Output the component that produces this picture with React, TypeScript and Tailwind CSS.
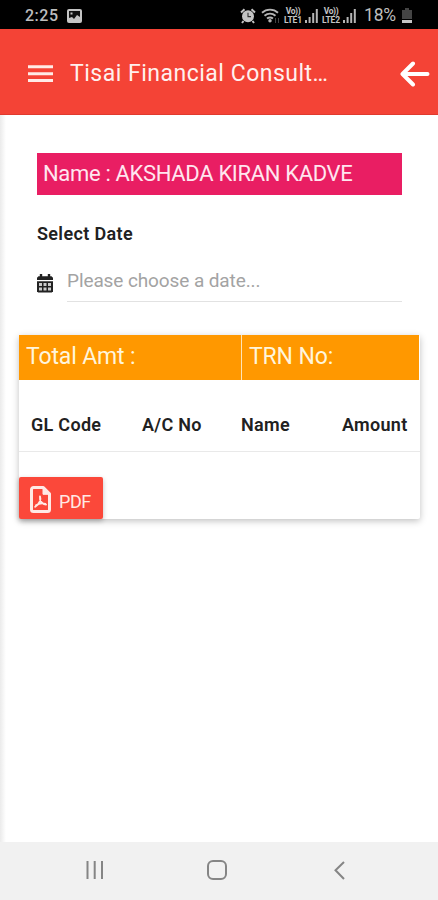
import React from 'react';

const columns = [
  { label: 'GL Code', className: 'w-[111px]' },
  { label: 'A/C No', className: 'w-[99px]' },
  { label: 'Name', className: 'w-[101px]' },
  { label: 'Amount', className: '' },
];

const Signal = () => (
  <svg width="13" height="14" viewBox="0 0 13 14" fill="#b5b5b5">
    <rect x="0" y="11" width="2" height="3" />
    <rect x="3.6" y="8" width="2" height="6" />
    <rect x="7.2" y="4" width="2" height="10" />
    <rect x="10.8" y="0" width="2" height="14" />
  </svg>
);

const Lte = ({ sim }: { sim: number }) => (
  <div className="w-[20px] text-center text-[8.5px] font-bold leading-[8.5px] whitespace-nowrap text-[#c4c4c4]">
    <div className="tracking-[-0.4px]">Vo))</div>
    <div className="tracking-[-0.2px]">LTE{sim}</div>
  </div>
);

const StatusBar = () => (
  <div className="flex h-[29px] shrink-0 items-center bg-black pt-[2px] pl-[25px] text-[#bdbdbd]">
    <span className="w-[42px] text-[16px] font-medium leading-none tracking-[0.5px]">2:25</span>
    <svg width="15" height="14" viewBox="0 0 15 14">
      <rect width="15" height="14" rx="2" fill="#c4c4c4" />
      <path d="M2 9V2h11v6l-3-2-3 4-2-2z" fill="#111" />
      <rect x="3.5" y="3.5" width="2" height="2" fill="#c4c4c4" />
    </svg>

    <svg className="ml-[158px]" width="16" height="16" viewBox="0 0 16 16" fill="none">
      <path d="M1 4.5L4.5 1.2M15 4.5L11.5 1.2M3.5 13L2 15M12.5 13l1.5 2" stroke="#c4c4c4" strokeWidth="2" />
      <circle cx="8" cy="8.3" r="6" fill="#c4c4c4" />
      <path d="M8 4.8v3.8h3" stroke="#333" strokeWidth="1.1" />
    </svg>
    <svg className="ml-[5px]" width="19" height="16" viewBox="0 0 19 16" fill="none" stroke="#b5b5b5" strokeWidth="1.9">
      <path d="M1 4.8C5.5 .6 12.5 .6 17 4.8M3.5 7.8c3.3-2.8 7.7-2.8 11 0M6 10.6c2-1.6 4-1.6 6 0" />
      <circle cx="9" cy="12.7" r=".8" fill="#b5b5b5" />
      <path d="M14.5 10v5M17.5 10v5" stroke="#444" strokeWidth="1" />
    </svg>
    <div className="ml-[3px] flex items-center gap-[2px]">
      <Lte sim={1} />
      <Signal />
    </div>
    <div className="ml-[3px] flex items-center gap-[2px]">
      <Lte sim={2} />
      <Signal />
    </div>
    <span className="ml-[8px] w-[38px] whitespace-nowrap text-[17.5px] leading-none tracking-[-0.2px]">18%</span>
    <svg width="10" height="15" viewBox="0 0 10 15">
      <path d="M3 0h4v2h3v9H0V2h3z" fill="#444" />
      <path d="M0 12h10v3H0z" fill="#c4c4c4" />
    </svg>
  </div>
);

const Header = () => (
  <header className="flex h-[86px] shrink-0 items-center border-b border-[#e03a2e] bg-[#f44336] pl-[28px] text-white shadow-[0_1px_4px_rgba(0,0,0,0.2)]">
    <svg className="mt-[5px] mr-[17px]" width="25" height="18" viewBox="0 0 25 18" fill="#ffebe6">
      <path d="M0 .3h25v3H0zM0 7.2h25v3H0zM0 14h25v3H0z" />
    </svg>
    <h1 className="mt-[4px] w-[330px] whitespace-nowrap text-[23px] leading-none tracking-[0.5px] text-[#fff0ee]">
      Tisai Financial Consult…
    </h1>
    <svg className="mt-[4px]" width="30" height="26" viewBox="0 0 30 26" fill="none" stroke="currentColor" strokeWidth="4" strokeLinecap="round" strokeLinejoin="round">
      <path d="M27.5 13H3M13 2.5L2.5 13L13 23.5" />
    </svg>
  </header>
);

const CalendarIcon = () => (
  <svg className="mt-[10px]" width="16" height="19" viewBox="0 0 16 19">
    <path d="M2.8 0h2.4v2.2h5.6V0h2.4v2.2h1.3L16 3.8V6H0V3.8l1.5-1.6h1.3z" fill="#222" />
    <path d="M0 7.2h16v10l-1.2 1.3H1.2L0 17.2z" fill="#222" />
    <path
      d="M2 9h3v3H2zM6.5 9h3v3h-3zM11 9h3v3h-3zM2 13.5h3v3H2zM6.5 13.5h3v3h-3zM11 13.5h3v3h-3z"
      fill="#ccc"
    />
  </svg>
);

const PdfIcon = () => (
  <svg className="mt-[2px]" width="21" height="27" viewBox="0 0 21 27" fill="none" stroke="#ffe9e5" strokeLinejoin="round">
    <path d="M3.5 1.5h9.8l6.2 6.3v15.7a2 2 0 0 1-2 2h-14a2 2 0 0 1-2-2v-20a2 2 0 0 1 2-2z" strokeWidth="3" />
    <path d="M13 1.5v6.8h6.5z" fill="#ffe9e5" strokeWidth="1" />
    <path d="M10 10.5c1.2 3-.2 7.5-4.8 10.3M10 11c-.6 4 2.2 7 6 7.6M6 19.3c2.8-1.8 6-2.4 9.5-1.4" strokeWidth="1.9" strokeLinecap="round" />
  </svg>
);

const NavBar = () => (
  <nav className="h-[58px] shrink-0 bg-[#f1f1f1]">
    <svg width="438" height="58" viewBox="0 0 438 58" fill="none" stroke="#858585" strokeWidth="2">
      <path d="M87.5 19v18M94.7 19v18M102 19v18" />
      <rect x="208" y="19" width="18" height="18" rx="5" />
      <path d="M344 20l-8.5 8.2L344 37" />
    </svg>
  </nav>
);

const App = () => {
  return (
    <div className="flex h-[900px] w-[438px] flex-col overflow-hidden bg-white font-['Roboto',sans-serif]">
      <StatusBar />
      <Header />

      <main className="flex flex-1 flex-col bg-[linear-gradient(to_right,#ebebeb,#ffffff_6px)]">
        <section className="mt-[38px] ml-[37px] w-[365px]">
          <div className="flex h-[42px] items-center bg-[#e91e63] pl-[6px] text-[22px] leading-none tracking-[-0.33px] whitespace-nowrap text-[#ffe6ef]">
            Name : AKSHADA KIRAN KADVE
          </div>
          <div className="mt-[29px] text-[18px] font-semibold leading-5 tracking-[0.35px] text-[#212121]">Select Date</div>
          <div className="mt-[20px] flex h-[38px]">
            <CalendarIcon />
            <div className="ml-[14px] flex-1 border-b border-[#e2e2e2] pt-[5px] text-[19px] leading-6 tracking-[-0.1px] text-[#a3a3a3]">
              Please choose a date...
            </div>
          </div>
        </section>

        <section className="mt-[33px] ml-[19px] h-[184px] w-[401px] rounded-[2px] bg-white shadow-[0_2px_7px_rgba(0,0,0,0.25)]">
          <div className="flex h-[45px] w-[400px] gap-px bg-[#ffe4b8] text-[23px] leading-[44px] tracking-[-0.15px] text-[#fff5dc]">
            <div className="w-[222px] bg-[#ff9800] pl-[7px]">Total Amt :</div>
            <div className="flex-1 bg-[#ff9800] pl-[7px]">TRN No:</div>
          </div>
          <div className="flex h-[72px] border-b border-[#e9e9e9] pt-[35px] pl-[12px] text-[18px] font-semibold leading-5 tracking-[0.3px] whitespace-nowrap text-[#212121]">
            {columns.map((col) => (
              <div key={col.label} className={col.className}>{col.label}</div>
            ))}
          </div>
          <button className="mt-[25px] flex h-[42px] w-[84px] items-center rounded-[2px] bg-[#fb483a] pl-[11px] text-[#ffe9e5] shadow-[0_2px_5px_rgba(0,0,0,0.25)]">
            <PdfIcon />
            <span className="mt-[8px] ml-[8px] text-[18px] leading-none tracking-[-0.4px]">PDF</span>
          </button>
        </section>
      </main>

      <NavBar />
    </div>
  );
};

export default App;
